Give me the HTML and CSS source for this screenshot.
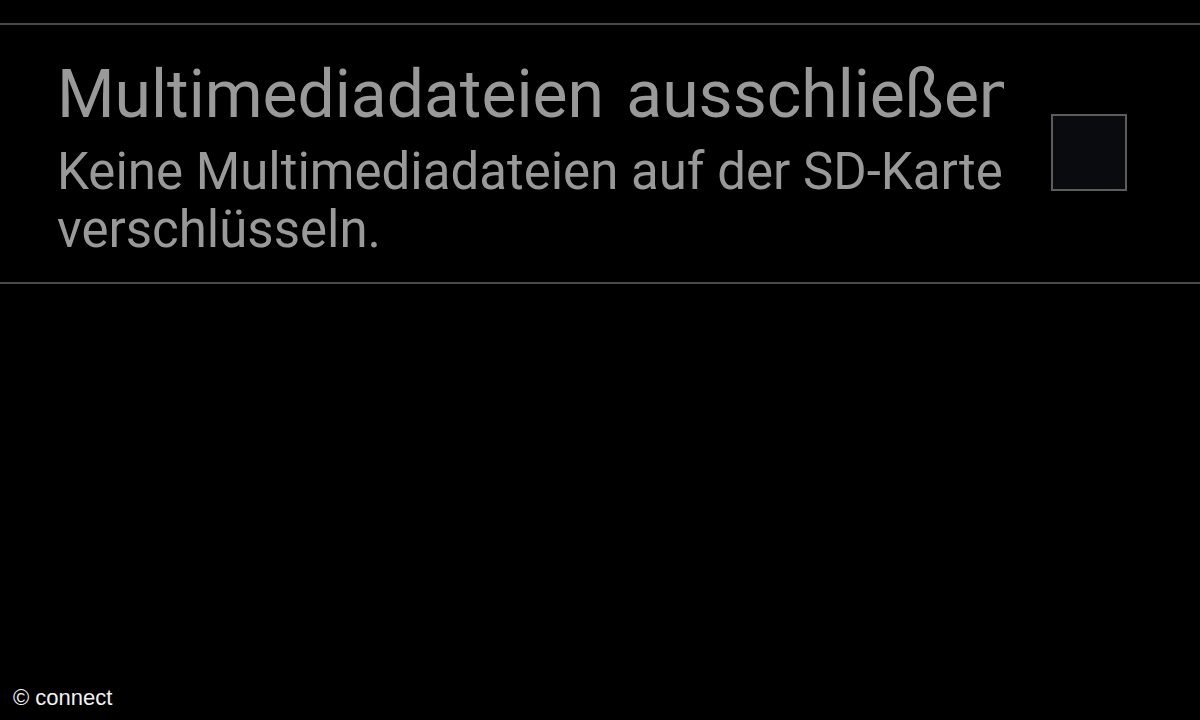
FILE: index.html
```html
<!DOCTYPE html>
<html lang="de">
<head>
<meta charset="utf-8">
<link rel="stylesheet" href="styles.css">
</head>
<body>
<div class="screen">
  <div class="divider top"></div>
  <div class="pref">
    <div class="texts">
      <div class="title">Multimediadateien ausschließen</div>
      <div class="summary">Keine Multimediadateien auf der SD-Karte verschlüsseln.</div>
    </div>
    <div class="check"><div class="box"></div></div>
  </div>
  <div class="divider"></div>
  <div class="credit">© connect</div>
</div>
</body>
</html>
```
FILE: styles.css
```css
html, body {
  margin: 0;
  padding: 0;
  background: #000;
}
.screen {
  width: 1200px;
  height: 720px;
  position: relative;
  overflow: hidden;
  background: #000;
  font-family: Roboto, "Noto Sans", sans-serif;
}
.divider {
  height: 2px;
  background: #4a4a4a;
}
.divider.top {
  margin-top: 23px;
}
.pref {
  display: flex;
  align-items: flex-start;
  height: 257px;
  box-sizing: border-box;
  padding: 22px 0 0 57px;
}
.texts {
  width: 947px;
  overflow: hidden;
}
.title {
  white-space: nowrap;
  color: #999;
  font-size: 66px;
  line-height: 96px;
  word-spacing: 6px;
}
.summary {
  color: #999;
  font-size: 51px;
  line-height: 58px;
}
.check {
  padding: 67px 0 0 47px;
}
.box {
  width: 72px;
  height: 73px;
  border: 2px solid #5c5c5c;
  background: #090b0e;
}
.credit {
  position: absolute;
  left: 13px;
  bottom: 9px;
  color: #f2f2f2;
  font-family: "Liberation Sans", Arial, sans-serif;
  font-size: 22px;
}
```
